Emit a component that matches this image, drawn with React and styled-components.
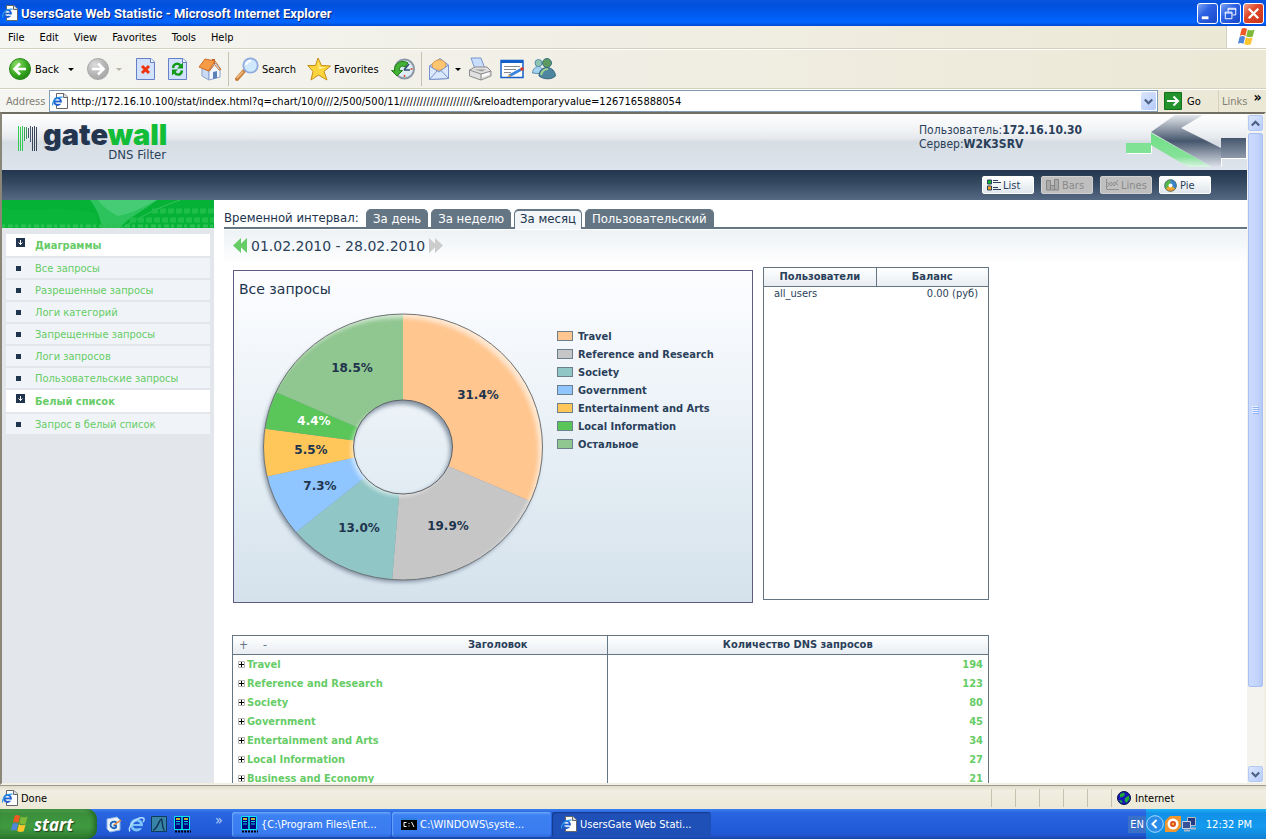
import React,{useState} from "react";
import styled,{createGlobalStyle} from "styled-components"

const menuItems=["File","Edit","View","Favorites","Tools","Help"]

const sections=[
  {title:"Диаграммы",links:["Все запросы","Разрешенные запросы","Логи категорий","Запрещенные запросы","Логи запросов","Пользовательские запросы"]},
  {title:"Белый список",links:["Запрос в белый список"]},
]

const intervals=["За день","За неделю","За месяц","Пользовательский"]

const slices=[
  {name:"Travel",value:31.4,label:"31.4%",color:"#ffc68f",x:244,y:129},
  {name:"Reference and Research",value:19.9,label:"19.9%",color:"#c6c6c6",x:214,y:260},
  {name:"Society",value:13.0,label:"13.0%",color:"#90c6c6",x:125,y:262},
  {name:"Government",value:7.3,label:"7.3%",color:"#90c6ff",x:86,y:220},
  {name:"Entertainment and Arts",value:5.5,label:"5.5%",color:"#ffc65a",x:77,y:184},
  {name:"Local Information",value:4.4,label:"4.4%",color:"#5ac65a",x:80,y:155,light:true},
  {name:"Остальное",value:18.5,label:"18.5%",color:"#90c690",x:118,y:102},
]

const requests=[
  ["Travel",194],
  ["Reference and Research",123],
  ["Society",80],
  ["Government",45],
  ["Entertainment and Arts",34],
  ["Local Information",27],
  ["Business and Economy",21],
]

const CX=169
const CY=177

// point where a ray at the given share of the turn leaves the ellipse
const edge=(share,rx,ry)=>{
  const a=share*Math.PI*2
  const dx=Math.sin(a)
  const dy=-Math.cos(a)
  const r=1/Math.sqrt((dx/rx)**2+(dy/ry)**2)
  return `${(CX+dx*r).toFixed(2)} ${(CY+dy*r).toFixed(2)}`
}

const slicePath=(from,to)=>
  `M${edge(from,49.5,47)}L${edge(from,139.5,133)}A139.5 133 0 0 1 ${edge(to,139.5,133)}L${edge(to,49.5,47)}A49.5 47 0 0 0 ${edge(from,49.5,47)}Z`

const oval=(cx,cy,rx,ry)=>`M${cx-rx} ${cy}a${rx} ${ry} 0 1 0 ${rx*2} 0a${rx} ${ry} 0 1 0 ${-rx*2} 0Z`

const ring=oval(CX,CY,139.5,133)+oval(CX,CY,49.5,47)

const Flag=({size=18})=>(
  <svg width={size} height={size} viewBox="0 0 18 18" aria-hidden="true">
    <path d="M4.2 1.6C6 .7 7.300 .8 9 1.800L7.500 8C6 7.100 4.400 7 2.600 7.900Z" fill="#ee5a24"/>
    <path d="M9.800 2.200C11.600 3.200 13.400 3.300 15.800 2.200L14.200 8.500C12 9.500 10 9.300 8.300 8.400Z" fill="#7fb93a"/>
    <path d="M2.400 8.700C4.200 7.900 5.800 8 7.300 8.900L5.800 15C4.200 14.200 2.600 14.100 .8 15Z" fill="#4f86d9"/>
    <path d="M8 9.300C9.700 10.200 11.600 10.400 14 9.400L12.400 15.600C10.200 16.600 8.200 16.300 6.500 15.400Z" fill="#fbc52c"/>
  </svg>
)

const IePage=({size=16})=>(
  <svg width={size} height={size} viewBox="0 0 16 16" aria-hidden="true">
    <path d="M4.500 .5H12L15.500 4V15.500H4.500Z" fill="#fff" stroke="#666"/>
    <path d="M11.500 .5V4.500H15.500" fill="#ddd" stroke="#666"/>
    <circle cx="5.500" cy="8.500" r="3.400" fill="#fff" stroke="#1c5fd0" strokeWidth="2"/>
    <path d="M3 8.500H9" stroke="#1c5fd0" strokeWidth="1.800"/>
    <path d="M.8 12.500C-.5 8 5 3.500 10.500 4.200" fill="none" stroke="#2d9be8" strokeWidth="1.200"/>
    <path d="M6.500 10.200H10" stroke="#fff" strokeWidth="1.200"/>
  </svg>
)

const IeBall=()=>(
  <svg width="17" height="17" viewBox="0 0 17 17" aria-hidden="true">
    <circle cx="8.500" cy="9" r="5" fill="none" stroke="#7cc4fa" strokeWidth="3"/>
    <path d="M4.500 9H13.500" stroke="#7cc4fa" strokeWidth="2"/>
    <path d="M9 11.200H15" stroke="#245edb" strokeWidth="2"/>
    <path d="M2 15.500C-1 11 9 .5 15 2C17 2.700 16 5 15 6" fill="none" stroke="#b7e0ff" strokeWidth="1.400"/>
  </svg>
)

const FarIcon=()=>(
  <svg width="17" height="17" viewBox="0 0 17 17" aria-hidden="true">
    <path d="M.5 .5H15.500V13.500H.5Z" fill="#00007c" stroke="#00e8f0"/>
    <path d="M8 0V14" stroke="#00e8f0" strokeWidth="1.500"/>
    <path d="M2 3H6M10 3H14" stroke="#ffee20" strokeWidth="1.500"/>
    <path d="M2 5.500H6M2 8H6M10 5.500H14M10 8H14" stroke="#00d0e0"/>
    <path d="M1 15.500H17" stroke="#000" strokeWidth="2" strokeDasharray="2 1"/>
  </svg>
)

const CmdIcon=()=>(
  <svg width="16" height="16" viewBox="0 0 16 16" aria-hidden="true">
    <path d="M0 2H16V14H0Z" fill="#000"/>
    <path d="M0 2H16V4H0Z" fill="#2a7fe0"/>
    <path d="M5.500 6.500H3V10.500H5.500M8 7V8M8 9.500V10.500M10.500 6L13 11" fill="none" stroke="#fff"/>
  </svg>
)

const BackIcon=({off})=>(
  <svg width="24" height="24" viewBox="0 0 24 24" aria-hidden="true">
    <defs>
      <radialGradient id={off?"fwdg":"backg"} cx=".35" cy=".3" r=".8">
        <stop offset="0" stopColor={off?"#dcdcdc":"#8fdc6d"}/>
        <stop offset=".6" stopColor={off?"#b4b4b4":"#37a81f"}/>
        <stop offset="1" stopColor={off?"#a5a5a5":"#1d7d12"}/>
      </radialGradient>
    </defs>
    <circle cx="12" cy="12" r="10.500" fill={off?"url(#fwdg)":"url(#backg)"} stroke={off?"#a9a9a9":"#2b8a1c"}/>
    <path d={off?"M6 12H17M12 6.500L17.500 12L12 17.500":"M18 12H7M12 6.500L6.500 12L12 17.500"} fill="none" stroke="#fff" strokeWidth="2.600"/>
  </svg>
)

const StopIcon=()=>(
  <svg width="24" height="24" viewBox="0 0 24 24" aria-hidden="true">
    <path d="M2.500 1.500H17L20.500 5V22.500H2.500Z" fill="#d3e2fc" stroke="#6580c8"/>
    <path d="M16.500 1.500V5.500H20.500" fill="#fff" stroke="#6580c8"/>
    <path d="M8 9L15 16M15 9L8 16" stroke="#f0330c" strokeWidth="3"/>
  </svg>
)

const RefreshIcon=()=>(
  <svg width="24" height="24" viewBox="0 0 24 24" aria-hidden="true">
    <path d="M2.500 1.500H17L20.500 5V22.500H2.500Z" fill="#d3e2fc" stroke="#6580c8"/>
    <path d="M16.500 1.500V5.500H20.500" fill="#fff" stroke="#6580c8"/>
    <path d="M7 11C7.500 6.500 12 5.500 14.500 8.500M16 13.500C15.500 18 11 19 8.500 15.500" fill="none" stroke="#129a16" strokeWidth="2.400"/>
    <path d="M17 5.500V11.500H11ZM6 18.500V12.500H12Z" fill="#129a16"/>
  </svg>
)

const HomeIcon=()=>(
  <svg width="24" height="24" viewBox="0 0 24 24" aria-hidden="true">
    <path d="M4 11L11 14V23L4 19Z" fill="#c9dbf5" stroke="#8ba3cc"/>
    <path d="M11 14L17 6L22 12V20L11 23Z" fill="#f3f7fd" stroke="#8ba3cc"/>
    <path d="M15 15L19 14V21L15 22Z" fill="#5c7fb8"/>
    <path d="M14 2H17V7H14Z" fill="#c05a2a"/>
    <path d="M1 10L7 2L17 4L10.500 14Z" fill="#f59a45" stroke="#d0702a"/>
    <path d="M17 4L23 12.500L21 13L16.500 7.500L11 14.500" fill="none" stroke="#d0702a"/>
  </svg>
)

const SearchIcon=()=>(
  <svg width="24" height="24" viewBox="0 0 24 24" aria-hidden="true">
    <path d="M2 22L9 14" stroke="#c9803c" strokeWidth="4" strokeLinecap="round"/>
    <path d="M2 21L8 14.500" stroke="#f3bc82" strokeWidth="1.500"/>
    <circle cx="15.500" cy="8.500" r="7.200" fill="#cfe8fb" stroke="#8fabe0" strokeWidth="1.800"/>
    <path d="M11 8C11.500 5.500 13.500 4 16 4" fill="none" stroke="#fff" strokeWidth="2"/>
  </svg>
)

const StarIcon=()=>(
  <svg width="24" height="24" viewBox="0 0 24 24" aria-hidden="true">
    <path d="M11 1L14.500 8.500L23.500 9L17 14.500L20 23L11.500 18L4 23L6 14.500L.8 8.500L8.500 8.500Z" fill="#fcd53c" stroke="#c58d16"/>
    <path d="M11 4L12.800 10L19 10.500L12 12Z" fill="#fff3a8"/>
  </svg>
)

const HistoryIcon=()=>(
  <svg width="24" height="24" viewBox="0 0 24 24" aria-hidden="true">
    <circle cx="13.500" cy="12" r="9.500" fill="#dcebf4" stroke="#8b97a4" strokeWidth="2"/>
    <path d="M3.500 14C2.500 6 11 2 17 6L14 10C10.500 8 8 10 8.500 13.500H11.500L6 19L.5 13.500Z" fill="#45b036" stroke="#1d7d12"/>
    <path d="M13 13L18 7M13 13H19" stroke="#35506e" strokeWidth="1.600"/>
    <path d="M13.500 18V20M19.500 12H21.500" stroke="#d9402a" strokeWidth="1.500"/>
  </svg>
)

const MailIcon=()=>(
  <svg width="24" height="24" viewBox="0 0 24 24" aria-hidden="true">
    <path d="M1.500 9L12 1.500L20.500 8V21.500L1.500 22.500Z" fill="#b8d0f5" stroke="#7b93cc"/>
    <path d="M4 7C8 2 14 1 18 7L17 13H5Z" fill="#fbc66f" stroke="#dd9a4a"/>
    <path d="M1.500 9L11 15L20.500 8V21.500L1.500 22.500Z" fill="#d9e8fd" stroke="#7b93cc"/>
    <path d="M1.500 22.500L9 14M20.500 21.500L13 13.500" stroke="#7b93cc"/>
  </svg>
)

const PrintIcon=()=>(
  <svg width="24" height="24" viewBox="0 0 24 24" aria-hidden="true">
    <path d="M3 1H13L17 12H7Z" fill="#c9defc" stroke="#7896d0"/>
    <path d="M1.500 13L7 10H19L23 14V19L13 23L1.500 19Z" fill="#e0e0e0" stroke="#8c8c8c"/>
    <path d="M1.500 13L13 17L23 14M13 17V23" fill="none" stroke="#8c8c8c"/>
    <path d="M6 12.500H18L14 14.500Z" fill="#9a9a9a"/>
    <path d="M14 19L21 16.500" stroke="#fff" strokeWidth="2"/>
  </svg>
)

const EditIcon=()=>(
  <svg width="24" height="24" viewBox="0 0 24 24" aria-hidden="true">
    <path d="M1 3.500H23V20.500H1Z" fill="#fff" stroke="#1560c8" strokeWidth="1.500"/>
    <path d="M1 3H23V6H1Z" fill="#1560c8"/>
    <path d="M4 9.500H20M4 12.500H16M4 15.500H11" stroke="#8a8a8a"/>
    <path d="M9 19L21 12.500" stroke="#3a86de" strokeWidth="3"/>
    <path d="M6.500 20L10 17.500L11 19.500Z" fill="#e8a040"/>
    <circle cx="22" cy="12" r="1.800" fill="#e0341c"/>
  </svg>
)

const PeopleIcon=()=>(
  <svg width="24" height="24" viewBox="0 0 24 24" aria-hidden="true">
    <circle cx="6.500" cy="6" r="3.500" fill="#8cc4b4" stroke="#5a8eaa"/>
    <path d="M.5 16C1 11 4 9.500 7 9.500C9 10 11 12 11 17Z" fill="#a4d3f2" stroke="#5a8eaa"/>
    <circle cx="15" cy="6" r="4.500" fill="#5c9a60" stroke="#3b7486"/>
    <path d="M7 19C7 13 11 10.500 15 10.500C20 11 23 14 23.500 19C19 23 12 22.500 7 19Z" fill="#4e86a0" stroke="#35657e"/>
    <path d="M9 18C10 14 13 12 16 12" fill="none" stroke="#a2d490" strokeWidth="2"/>
  </svg>
)

const Caret=({off})=>(
  <svg width="6" height="3" viewBox="0 0 6 3" aria-hidden="true"><path d="M0 0H6L3 3Z" fill={off?"#b8b5a4":"#000"}/></svg>
)

const Chevron=({up})=>(
  <svg width="9" height="7" viewBox="0 0 9 7" aria-hidden="true">
    <path d={up?"M.8 5.500L4.500 1.800L8.200 5.500":"M.8 1.500L4.500 5.200L8.200 1.500"} fill="none" stroke="#4d6185" strokeWidth="2.200"/>
  </svg>
)

const Arrows=({back,color})=>(
  <svg width="14" height="15" viewBox="0 0 14 15" aria-hidden="true">
    <path d={back?"M8 0V15L0 7.500ZM14 0V15L6 7.500Z":"M0 0V15L8 7.500ZM6 0V15L14 7.500Z"} fill={color}/>
  </svg>
)

const viewIcons={
  List:<svg width="15" height="12" viewBox="0 0 15 12" aria-hidden="true">
    <path d="M.5 1H4.500V5H.5Z" fill="#0cb830" stroke="#2c4059"/><path d="M.5 7H4.500V11H.5Z" fill="#f9a31c" stroke="#2c4059"/>
    <path d="M6 1.500H11M6 3.500H14M6 8.500H11M6 10.500H14" stroke="#2c4059"/>
  </svg>,
  Bars:<svg width="15" height="12" viewBox="0 0 15 12" aria-hidden="true">
    <path d="M.5 1.500H4.500V11H.5ZM4.500 6.500H8.500V11H4.500ZM8.500 .5H12.500V11H8.500Z" fill="#a9a9a9" stroke="#868686"/>
  </svg>,
  Lines:<svg width="15" height="12" viewBox="0 0 15 12" aria-hidden="true">
    <path d="M1.500 0V10.500H14M2 8L6 3L9 7L13 1M2 3L6 7L9 3L13 6" fill="none" stroke="#909090"/>
  </svg>,
  Pie:<svg width="15" height="13" viewBox="0 0 15 13" aria-hidden="true">
    <circle cx="6.500" cy="6.500" r="6" fill="#55b948"/>
    <path d="M6.500 .5A6 6 0 0 1 11.500 9.800L6.500 6.500Z" fill="#3a86cc"/>
    <path d="M11.500 9.800A6 6 0 0 1 1.500 9.800L6.500 6.500Z" fill="#f4a32a"/>
    <circle cx="6.500" cy="6.500" r="5.800" fill="none" stroke="#47627a" strokeWidth=".8"/>
    <circle cx="6.500" cy="6.500" r="2" fill="#fff"/>
  </svg>,
}

const LogoBars=()=>(
  <svg width="19" height="26" viewBox="0 0 19 26" aria-hidden="true">
    <path d="M.5 0V25M2.500 1V25M4.500 0V25" stroke="#34cc55"/>
    <path d="M6.500 1V15M8.500 1V13" stroke="#3d9c5c"/>
    <path d="M10.500 2V12M12.500 0V16" stroke="#4a5a6c"/>
    <path d="M14.500 1V25M16.500 0V25M18.500 1V25" stroke="#3a4658"/>
  </svg>
)

const HeaderArt=()=>(
  <svg width="121" height="56" viewBox="0 0 121 56" aria-hidden="true">
    <defs>
      <linearGradient id="fadeDark" x1="0" y1="0" x2="0" y2="1">
        <stop offset="0" stopColor="#e4e8ec"/>
        <stop offset=".5" stopColor="#46566d"/>
        <stop offset="1" stopColor="#dde2ea"/>
      </linearGradient>
      <linearGradient id="fadeBox" x1="0" y1="0" x2="0" y2="1">
        <stop offset="0" stopColor="#46566d"/>
        <stop offset="1" stopColor="#8e9aab"/>
      </linearGradient>
      <linearGradient id="fadeGreen" x1="0" y1="0" x2="0" y2="1">
        <stop offset="0" stopColor="#6fdf86"/>
        <stop offset=".7" stopColor="#85e298"/>
        <stop offset="1" stopColor="#dff4e6"/>
      </linearGradient>
    </defs>
    <path d="M1 30H26V40H1Z" fill="#fff"/>
    <path d="M0 29H25V39H0Z" fill="#7fe294"/>
    <path d="M25 19L86 53H62L25 31Z" fill="url(#fadeGreen)"/>
    <path d="M25 18L49 1H77L55 14L95 34V53H86Z" fill="url(#fadeDark)"/>
    <path d="M95 24H120V44H95Z" fill="url(#fadeBox)"/>
    <path d="M95.500 53V44.500H120.500V24" fill="none" stroke="#fff"/>
  </svg>
)

const BannerArt=()=>(
  <svg width="212" height="28" viewBox="0 0 212 28" aria-hidden="true">
    <path d="M0 0H212V28H0Z" fill="#06b236"/>
    <path d="M0 8C30 14 60 4 95 14V28H0Z" fill="#0ab63a"/>
    <path d="M88 0H155C140 12 125 18 118 28H100C98 16 94 8 88 0Z" fill="#2cc35c"/>
    <path d="M96 0H155C140 8 128 14 116 16C108 12 100 6 96 0Z" fill="#46cc74"/>
    <path d="M178 0C155 8 140 16 120 28" stroke="#35c45c" fill="none"/>
    <path d="M128 20H212M150 11H212" stroke="#1fbd4a" strokeWidth="5" strokeDasharray="6 2"/>
    <path d="M0 26H212" stroke="#2cc054" strokeWidth="3" strokeDasharray="3 3 5 2"/>
  </svg>
)

const Donut=()=>{
  let total=0
  return(
    <svg width="318" height="322" viewBox="0 0 318 322" role="img" aria-label="Все запросы">
      <defs>
        <filter id="soft" x="-20%" y="-20%" width="140%" height="140%"><feGaussianBlur stdDeviation="2"/></filter>
        <clipPath id="ringClip"><path d={ring} clipRule="evenodd"/></clipPath>
      </defs>
      <path d={oval(CX-2,CY+3,139,132)+oval(CX-2,CY+3,49,46)} fillRule="evenodd" fill="#44566c" opacity=".6" filter="url(#soft)"/>
      {slices.map((s)=>{
        const from=total/100
        total+=s.value
        return <path key={s.name} d={slicePath(from,total/100)} fill={s.color}/>
      })}
      <g clipPath="url(#ringClip)">
        <path
          d={"M-20 -20H340V340H-20Z"+oval(CX-4,CY+4,139.5,133)+oval(CX-3,CY+3,49,46)}
          fillRule="evenodd" fill="#fff" opacity=".6" filter="url(#soft)"
        />
      </g>
      <path d={oval(CX,CY,139.5,133)} fill="none" stroke="#707477"/>
      <path d={oval(CX,CY,49.5,47)} fill="none" stroke="#606468"/>
      {slices.map((s)=>(
        <SliceLabel key={s.name} x={s.x} y={s.y} $light={s.light}>{s.label}</SliceLabel>
      ))}
    </svg>
  )
}

const App=()=>{
    const [url,setUrl]=useState("http://172.16.10.100/stat/index.html?q=chart/10/0///2/500/500/11//////////////////////&reloadtemporaryvalue=1267165888054")
    const [interval,setInterval]=useState("За месяц")

    return(
     <Screen>
        <GlobalStyle/>
        <TitleBar>
            <IePage/>
            <Title>UsersGate Web Statistic - Microsoft Internet Explorer</Title>
            <WinButton aria-label="Minimize">
               <svg width="19" height="19" viewBox="0 0 20 20"><path d="M4 13H11V16H4Z" fill="#fff"/></svg>
            </WinButton>
            <WinButton aria-label="Restore">
               <svg width="19" height="19" viewBox="0 0 20 20"><path d="M7.500 8V4.500H15.500V11.500H12M7 5.500H16M4.500 8.500H11.500V15.500H4.500ZM4 9.500H12" fill="none" stroke="#fff"/></svg>
            </WinButton>
            <WinButton aria-label="Close" $close>
               <svg width="19" height="19" viewBox="0 0 20 20"><path d="M5 5L15 15M15 5L5 15" stroke="#fff" strokeWidth="2.400"/></svg>
            </WinButton>
        </TitleBar>

        <MenuBar>
            {menuItems.map((m)=><MenuItem key={m}>{m}</MenuItem>)}
            <FlagBox><Flag size={20}/></FlagBox>
        </MenuBar>

        <ToolBar>
            <ToolButton $width="70px"><BackIcon/>Back<CaretSlot><Caret/></CaretSlot></ToolButton>
            <ToolButton $width="40px" aria-label="Forward" disabled><BackIcon off/><CaretSlot><Caret off/></CaretSlot></ToolButton>
            <ToolButton aria-label="Stop"><StopIcon/></ToolButton>
            <ToolButton aria-label="Refresh"><RefreshIcon/></ToolButton>
            <ToolButton aria-label="Home"><HomeIcon/></ToolButton>
            <ToolLine/>
            <ToolButton $width="64px"><SearchIcon/>Search</ToolButton>
            <ToolButton $width="76px"><StarIcon/>Favorites</ToolButton>
            <ToolButton aria-label="History"><HistoryIcon/></ToolButton>
            <ToolLine/>
            <ToolButton $width="32px" aria-label="Mail"><MailIcon/><CaretSlot><Caret/></CaretSlot></ToolButton>
            <ToolButton aria-label="Print"><PrintIcon/></ToolButton>
            <ToolButton aria-label="Edit"><EditIcon/></ToolButton>
            <ToolButton aria-label="Messenger"><PeopleIcon/></ToolButton>
        </ToolBar>

        <AddressBar>
            <AddressLabel htmlFor="address">Address</AddressLabel>
            <AddressField>
               <IePage/>
               <AddressInput id="address" value={url} onChange={(e)=>setUrl(e.target.value)}/>
               <DropButton aria-label="Show addresses"><Chevron/></DropButton>
            </AddressField>
            <GoButton>
               <svg width="18" height="18" viewBox="0 0 18 18" aria-hidden="true">
                  <path d="M.5 .5H17.500V17.500H.5Z" fill="#22922a" stroke="#15701c"/>
                  <path d="M3 9H14M9.500 4.500L14 9L9.500 13.500" fill="none" stroke="#fff" strokeWidth="2"/>
               </svg>
               Go
            </GoButton>
            <Links>Links<LinksMore>»</LinksMore></Links>
        </AddressBar>

        <Viewport>
            <Page>
               <Header>
                  <LogoBars/>
                  <Brand>
                     <Wordmark>gate<GreenWord>wall</GreenWord></Wordmark>
                     <Product>DNS Filter</Product>
                  </Brand>
                  <UserInfo>
                     <div>Пользователь:<b>172.16.10.30</b></div>
                     <div>Сервер:<b>W2K3SRV</b></div>
                  </UserInfo>
                  <HeaderArt/>
               </Header>
               <NavBar>
                  {["List","Bars","Lines","Pie"].map((v)=>(
                     <ViewButton key={v} disabled={v==="Bars"||v==="Lines"}>{viewIcons[v]}{v}</ViewButton>
                  ))}
               </NavBar>
               <Columns>
                  <Sidebar>
                     <BannerArt/>
                     <SideList>
                        {sections.map((s)=>(
                           <React.Fragment key={s.title}>
                              <SideTitle>
                                 <svg width="9" height="9" viewBox="0 0 9 9" aria-hidden="true">
                                    <path d="M0 0H9V9H0Z" fill="#21344d"/>
                                    <path d="M4.500 2V7M2.500 4.500L4.500 6.500L6.500 4.500" fill="none" stroke="#fff"/>
                                 </svg>
                                 <span>{s.title}</span>
                              </SideTitle>
                              {s.links.map((l)=><SideLink key={l} href="#"><Bullet/>{l}</SideLink>)}
                           </React.Fragment>
                        ))}
                     </SideList>
                  </Sidebar>
                  <Main>
                     <TabRow>
                        <TabCaption>Временной интервал:</TabCaption>
                        {intervals.map((t)=>(
                           <Tab key={t} $active={t===interval} onClick={()=>setInterval(t)}>{t}</Tab>
                        ))}
                     </TabRow>
                     <DateRow>
                        <PlainButton aria-label="Назад"><Arrows back color="#66cc66"/></PlainButton>
                        01.02.2010 - 28.02.2010
                        <PlainButton aria-label="Вперед"><Arrows color="#cccccc"/></PlainButton>
                     </DateRow>
                     <Report>
                        <TopRow>
                           <ChartPanel>
                              <ChartTitle>Все запросы</ChartTitle>
                              <ChartBody>
                                 <Donut/>
                                 <Legend>
                                    {slices.map((s)=><LegendItem key={s.name}><Swatch $color={s.color}/>{s.name}</LegendItem>)}
                                 </Legend>
                              </ChartBody>
                           </ChartPanel>
                           <BalancePanel>
                              <Table>
                                 <thead><tr><Th>Пользователи</Th><Th>Баланс</Th></tr></thead>
                                 <tbody><tr><BalanceCell>all_users</BalanceCell><BalanceCell $right>0.00 (руб)</BalanceCell></tr></tbody>
                              </Table>
                           </BalancePanel>
                        </TopRow>
                        <RequestPanel>
                           <Table>
                              <thead>
                                 <tr>
                                    <Th $width="374px">
                                       <HeadRow>
                                          <PlusMinus><PlainButton aria-label="Развернуть">+</PlainButton><PlainButton aria-label="Свернуть">-</PlainButton></PlusMinus>
                                          <HeadText>Заголовок</HeadText>
                                       </HeadRow>
                                    </Th>
                                    <Th>Количество DNS запросов</Th>
                                 </tr>
                              </thead>
                              <tbody>
                                 {requests.map(([name,count])=>(
                                    <tr key={name}>
                                       <Td>
                                          <Expand>
                                             <svg width="7" height="7" viewBox="0 0 7 7" aria-hidden="true">
                                                <path d="M.5 .5H6.500V6.500H.5Z" fill="#fff" stroke="#b4b4b4"/>
                                                <path d="M3.500 1V6M1 3.500H6" stroke="#000"/>
                                             </svg>
                                             {name}
                                          </Expand>
                                       </Td>
                                       <Td $right>{count}</Td>
                                    </tr>
                                 ))}
                              </tbody>
                           </Table>
                        </RequestPanel>
                     </Report>
                  </Main>
               </Columns>
            </Page>
            <ScrollBar>
               <ScrollButton aria-label="Scroll up"><Chevron up/></ScrollButton>
               <ScrollThumb>
                  <svg width="7" height="8" viewBox="0 0 7 8" aria-hidden="true">
                     <path d="M0 .5H6M0 2.500H6M0 4.500H6M0 6.500H6" stroke="#eef4fe"/>
                     <path d="M1 1.500H7M1 3.500H7M1 5.500H7M1 7.500H7" stroke="#8cb0f8"/>
                  </svg>
               </ScrollThumb>
               <ScrollSpace/>
               <ScrollButton aria-label="Scroll down"><Chevron/></ScrollButton>
            </ScrollBar>
        </Viewport>

        <StatusBar>
            <IePage/>
            <StatusText>Done</StatusText>
            {[1,2,3,4,5].map((n)=><StatusCell key={n}/>)}
            <StatusZone>
               <svg width="14" height="14" viewBox="0 0 14 14" aria-hidden="true">
                  <circle cx="7" cy="7" r="6.500" fill="#1414b8" stroke="#061040"/>
                  <path d="M3 3L7 1.500L8 4L5.500 6L3 6.500ZM8 7L12 4.500L12.500 8L9.500 12L7.500 10ZM2 9L5 9.500L5.500 12L3.500 11.500Z" fill="#1da83c"/>
               </svg>
               Internet
            </StatusZone>
        </StatusBar>

        <TaskBar>
            <StartButton><Flag size={20}/>start</StartButton>
            <QuickLaunch>
               <svg width="17" height="17" viewBox="0 0 17 17" aria-hidden="true">
                  <path d="M2 3L12 1L15 4V14L5 16L2 13Z" fill="#eaf3fc" stroke="#8fb5e4"/>
                  <path d="M11.500 6.500C9 4.500 5.500 6 5.500 9C5.500 12 9 13 11 11.500V9.500H8.500" fill="none" stroke="#1c62b8" strokeWidth="1.800"/>
                  <path d="M9 9L16 4" stroke="#e8832c" strokeWidth="1.500"/>
               </svg>
               <IeBall/>
               <svg width="17" height="17" viewBox="0 0 17 17" aria-hidden="true">
                  <path d="M.5 .5H15.500V15.500H.5Z" fill="#3983a8" stroke="#103c5c"/>
                  <path d="M2 14C7 13 7 5 10.500 3C12 5 10.500 12 13.500 14.500" fill="none" stroke="#0d3453" strokeWidth="1.400"/>
               </svg>
               <FarIcon/>
            </QuickLaunch>
            <More>»</More>
            <Task><FarIcon/>{"{C:\\Program Files\\Ent..."}</Task>
            <Task><CmdIcon/>{"C:\\WINDOWS\\syste..."}</Task>
            <Task $active><IePage/>UsersGate Web Stati...</Task>
            <Language>EN</Language>
            <Tray>
               <svg width="18" height="18" viewBox="0 0 18 18" aria-hidden="true">
                  <circle cx="9" cy="9" r="8.300" fill="#2a8ce8" stroke="#a5dcff"/>
                  <path d="M10.500 5L6.500 9L10.500 13" fill="none" stroke="#fff" strokeWidth="2"/>
               </svg>
               <svg width="16" height="16" viewBox="0 0 16 16" aria-hidden="true">
                  <path d="M5 0H16V11L11 16H0V5Z" fill="#f2962c"/>
                  <circle cx="8" cy="8" r="5.500" fill="#fff"/>
                  <circle cx="8" cy="8" r="3" fill="#d84a1c"/>
                  <circle cx="8" cy="8" r="1.300" fill="#fbb040"/>
               </svg>
               <svg width="15" height="15" viewBox="0 0 15 15" aria-hidden="true">
                  <path d="M5.500 .5H13.500V8.500H5.500Z" fill="#253a80" stroke="#b4bcc8"/>
                  <path d="M.5 4.500H8.500V11.500H.5Z" fill="#3a5298" stroke="#c8d0dc"/>
                  <path d="M2 13.500H8M9 11.500H14" stroke="#aeb6c2" strokeWidth="2"/>
               </svg>
               <Clock>12:32 PM</Clock>
            </Tray>
        </TaskBar>
     </Screen>
    )
}

export default App

const GlobalStyle=createGlobalStyle`
   *{box-sizing:border-box;}
   body{
     margin:0;
     overflow:hidden;
     font:11px "DejaVu Sans Condensed","DejaVu Sans",sans-serif;
     color:#000;
   }
   button{
     font:inherit;
     color:inherit;
     border:0;
     padding:0;
     background:none;
     white-space:nowrap;
   }
   svg{display:block;flex:none;}
`

const Screen=styled.div`
   height:100vh;
   display:flex;
   flex-direction:column;
   background:#ece9d8;
`

const TitleBar=styled.header`
   flex:none;
   height:26px;
   display:flex;
   align-items:center;
   gap:2px;
   padding:0 2px;
   background:linear-gradient(#0a55e0 0,#0050dc 20%,#0058ee 50%,#0066ff 85%,#0048d0 100%);
`

const Title=styled.h1`
   flex:1;
   margin:0;
   padding-left:1px;
   font:bold 13px Roboto,sans-serif;
   color:#fff;
   text-shadow:1px 1px 0 #0a1e6e;
`

const WinButton=styled.button`
   width:21px;
   height:21px;
   border:1px solid #fff;
   border-radius:3px;
   background:${(p)=>p.$close
     ?"linear-gradient(135deg,#f0a088,#e0482a 40%,#c8351a)"
     :"linear-gradient(135deg,#7fa4f4,#2c62e4 40%,#1a48c8)"};
`

const MenuBar=styled.nav`
   flex:none;
   height:23px;
   display:flex;
   align-items:center;
   padding-left:2px;
   border-bottom:1px solid #d5d1bf;
   background:linear-gradient(90deg,#f5f5f2,#ece8d6);
`

const MenuItem=styled.button`
   height:22px;
   padding:0 7px 0 6px;
   margin-right:2px;
`

const FlagBox=styled.div`
   align-self:stretch;
   width:40px;
   margin-left:auto;
   display:flex;
   align-items:center;
   justify-content:center;
   border-left:1px solid #d5d1bf;
   background:#fff;
`

const ToolBar=styled.div`
   flex:none;
   height:40px;
   display:flex;
   align-items:center;
   gap:8px;
   padding-left:8px;
   border-top:1px solid #fff;
   border-bottom:1px solid #d5d1bf;
   background:linear-gradient(90deg,#f5f5f2,#ece8d6);
`

const ToolButton=styled.button`
   width:${(p)=>p.$width||"24px"};
   display:flex;
   align-items:center;
   gap:3px;
`

const CaretSlot=styled.span`
   margin-left:auto;
   padding-right:4px;
`

const ToolLine=styled.div`
   width:1px;
   height:34px;
   margin:0 -2px;
   background:#c5c2b0;
`

const AddressBar=styled.div`
   flex:none;
   height:23px;
   display:flex;
   align-items:center;
   border-top:1px solid #fff;
   background:linear-gradient(90deg,#f5f5f2,#ece8d6);
`

const AddressLabel=styled.label`
   width:49px;
   padding-left:6px;
   color:#817f73;
`

const AddressField=styled.div`
   flex:1;
   height:22px;
   display:flex;
   align-items:center;
   gap:3px;
   padding:0 1px 0 2px;
   border:1px solid #7f9db9;
   background:#fff;
`

const AddressInput=styled.input`
   flex:1;
   min-width:0;
   border:0;
   padding:0;
   outline:0;
   font:inherit;
   background:none;
`

const DropButton=styled.button`
   width:15px;
   height:18px;
   display:flex;
   align-items:center;
   justify-content:center;
   border-radius:2px;
   background:linear-gradient(135deg,#dbe6fe,#b4cafb);
`

const GoButton=styled.button`
   width:60px;
   display:flex;
   align-items:center;
   gap:5px;
   padding-left:6px;
`

const Links=styled.div`
   width:48px;
   height:22px;
   display:flex;
   align-items:center;
   gap:6px;
   padding-left:3px;
   border-left:1px solid #d5d1bf;
   color:#817f73;
`

const LinksMore=styled.b`
   padding-bottom:8px;
   font-size:14px;
   line-height:14px;
   color:#000;
`

const Viewport=styled.div`
   flex:1;
   min-height:0;
   display:flex;
   border:2px solid #8a8778;
   border-top-color:#716f64;
   border-right-color:#f1efe2;
   border-bottom-color:#f1efe2;
   background:#fff;
`

const Page=styled.div`
   flex:1;
   min-width:0;
   overflow:hidden;
   display:flex;
   flex-direction:column;
   color:#2a3f5a;
`

const Header=styled.div`
   flex:none;
   height:56px;
   display:flex;
   padding-left:16px;
   background:linear-gradient(#fff 0,#f0f2f5 30%,#e4e8ec 44%,#d6dde3 50%,#dde4ec 100%);

   & > svg:first-child{
     margin-top:12px;
   }
`

const Brand=styled.div`
   width:130px;
   padding:9px 0 0 6px;
`

const Wordmark=styled.div`
   font:900 29px/24px Inter,"Liberation Sans",sans-serif;
   color:#24364f;
`

const GreenWord=styled.span`
   color:#12bd38;
`

const Product=styled.div`
   width:123px;
   font-size:13px;
   line-height:16px;
   text-align:right;
`

const UserInfo=styled.div`
   width:207px;
   margin-left:auto;
   padding-top:9px;
   font-size:12px;
   line-height:14px;
`

const NavBar=styled.div`
   flex:none;
   height:30px;
   display:flex;
   align-items:center;
   justify-content:flex-end;
   gap:7px;
   padding-right:36px;
   background:linear-gradient(#22364f,#33475f 40%,#556983);
`

const ViewButton=styled.button`
   width:52px;
   height:18px;
   display:flex;
   align-items:center;
   gap:1px;
   padding-left:4px;
   border-radius:2px;
   border:1px solid ${(p)=>p.disabled?"#d0d0d0":"#fff"};
   background:${(p)=>p.disabled?"#bfbfbf":"linear-gradient(#fff,#dfe6ec)"};
   color:${(p)=>p.disabled?"#8a8a8a":"#2a3f5a"};
`

const Columns=styled.div`
   flex:1;
   min-height:0;
   display:flex;
`

const Sidebar=styled.aside`
   flex:none;
   width:212px;
   background:#e3e7eb;
`

const SideList=styled.div`
   display:flex;
   flex-direction:column;
   gap:2px;
   padding:6px 4px;
`

const SideTitle=styled.div`
   height:22px;
   display:flex;
   gap:10px;
   padding:4px 10px 0;
   background:#fff;
   font-weight:bold;
   line-height:16px;
   color:#66cc66;
`

const SideLink=styled.a`
   height:20px;
   display:flex;
   align-items:center;
   gap:14px;
   padding-left:10px;
   background:#f0f4f8;
   color:#66cc66;
   text-decoration:none;
`

const Bullet=styled.span`
   width:5px;
   height:5px;
   background:#21344d;
`

const Main=styled.main`
   flex:1;
   min-width:0;
   padding-left:10px;
`

const TabRow=styled.div`
   height:29px;
   display:flex;
   align-items:flex-end;
   gap:3px;
   border-bottom:2px solid #647584;
`

const TabCaption=styled.span`
   width:139px;
   font-size:13px;
   line-height:18px;
   color:#21344d;
   white-space:nowrap;
`

const Tab=styled.button`
   height:${(p)=>p.$active?"20px":"18px"};
   margin-bottom:${(p)=>p.$active?"-2px":"0"};
   padding:${(p)=>p.$active?"0 5px 3px":"0 6px"};
   border-radius:5px 5px 0 0;
   border:1px solid #647584;
   border-top-width:${(p)=>p.$active?"2px":"1px"};
   border-bottom:0;
   background:${(p)=>p.$active?"#f2f6f8":"#647584"};
   color:${(p)=>p.$active?"#21344d":"#fff"};
   font-size:13px;
   line-height:15px;
`

const DateRow=styled.div`
   height:38px;
   display:flex;
   align-items:center;
   gap:4px;
   padding:0 0 6px 9px;
   font:14px "DejaVu Sans",sans-serif;
   background:linear-gradient(#edf2f5,#fff 34px);
   border-top:1px solid #fff;
`

const PlainButton=styled.button`
   display:block;
`

const Report=styled.div`
   max-width:765px;
   padding-left:8px;
`

const TopRow=styled.div`
   display:flex;
   align-items:flex-start;
   gap:10px;
`

const ChartPanel=styled.section`
   flex:1;
   height:333px;
   margin:3px 0 0 1px;
   border:1px solid #5d5c82;
   background:linear-gradient(#fdfdff,#f5f8fc 20%,#e8f0f6 50%,#d5e2ec);
`

const ChartTitle=styled.h2`
   margin:0;
   padding:10px 5px 0;
   font:14px/16px "DejaVu Sans",sans-serif;
   color:#21344d;
`

const ChartBody=styled.div`
   display:flex;
   margin-top:-27px;
`

const SliceLabel=styled.text`
   font:bold 12px "DejaVu Sans",sans-serif;
   fill:${(p)=>p.$light?"#fff":"#21344d"};
   text-anchor:middle;
`

const Legend=styled.ul`
   list-style:none;
   margin:0;
   padding:57px 0 0 5px;
`

const LegendItem=styled.li`
   height:18px;
   display:flex;
   align-items:center;
   gap:5px;
   font-weight:bold;
   white-space:nowrap;
`

const Swatch=styled.span`
   width:16px;
   height:10px;
   border:1px solid #6c7f8c;
   background:${(p)=>p.$color};
`

const BalancePanel=styled.section`
   width:226px;
   height:333px;
   border:1px solid #647584;
`

const RequestPanel=styled.section`
   margin-top:32px;
   border:1px solid #647584;
   border-bottom:0;
`

const Table=styled.table`
   width:100%;
   table-layout:fixed;
   border-collapse:collapse;
`

const Th=styled.th`
   width:${(p)=>p.$width||"auto"};
   height:18px;
   padding:1px 0 0;
   border-bottom:1px solid #647584;
   background:linear-gradient(#fff,#e8edf2);
   line-height:16px;

   & + &{
     border-left:1px solid #647584;
   }
`

const BalanceCell=styled.td`
   padding:0 10px;
   line-height:14px;
   text-align:${(p)=>p.$right?"right":"left"};
`

const HeadRow=styled.div`
   display:flex;
   align-items:center;
`

const PlusMinus=styled.span`
   width:40px;
   display:flex;
   justify-content:space-between;
   padding:0 6px 0 6px;
   font-size:12px;
   font-weight:normal;
   color:#647584;
`

const HeadText=styled.span`
   flex:1;
   padding-left:116px;
`

const Td=styled.td`
   height:19px;
   padding:1px 5px 0;
   font-weight:bold;
   line-height:15px;
   color:#66cc66;
   text-align:${(p)=>p.$right?"right":"left"};

   & + &{
     border-left:1px solid #647584;
   }
`

const Expand=styled.button`
   display:flex;
   align-items:center;
   gap:2px;
`

const ScrollBar=styled.div`
   flex:none;
   width:17px;
   display:flex;
   flex-direction:column;
   align-items:center;
   gap:2px;
   padding:1px;
   background:#f4f3ee;
`

const ScrollButton=styled.button`
   width:15px;
   height:16px;
   display:flex;
   align-items:center;
   justify-content:center;
   border:1px solid #b4c8f6;
   border-radius:2px;
   background:linear-gradient(135deg,#dbe6fe,#b9cdfb);
`

const ScrollThumb=styled.div`
   flex:88;
   width:15px;
   display:flex;
   align-items:center;
   justify-content:center;
   border:1px solid #a9c0f4;
   border-radius:2px;
   background:linear-gradient(90deg,#cbdafe,#c4d4fc 60%,#b4c8f8);
`

const ScrollSpace=styled.div`
   flex:12;
`

const StatusBar=styled.footer`
   flex:none;
   height:24px;
   display:flex;
   align-items:center;
   padding:1px 0 0 2px;
   border-top:1px solid #9d9b8d;
   background:linear-gradient(#dfdccb,#f0eee2 20%,#ece9d8);
`

const StatusText=styled.span`
   flex:1;
   padding-left:3px;
`

const StatusCell=styled.span`
   width:24px;
   height:18px;
   border-left:1px solid #c5c2b0;
`

const StatusZone=styled.span`
   width:155px;
   height:18px;
   display:flex;
   align-items:center;
   gap:4px;
   padding-left:5px;
   border-left:1px solid #c5c2b0;
`

const TaskBar=styled.footer`
   flex:none;
   height:30px;
   display:flex;
   align-items:center;
   background:linear-gradient(#3a80ee 0,#2a66e0 12%,#245edb 50%,#2058d4 85%,#1a45a8);
   color:#fff;
`

const StartButton=styled.button`
   width:97px;
   height:30px;
   display:flex;
   align-items:center;
   gap:4px;
   padding-left:10px;
   border-radius:0 10px 10px 0;
   background:linear-gradient(#5bac56 0,#3c8f3c 15%,#3f9a3f 60%,#2f7a30);
   box-shadow:inset -3px 0 4px #246a26;
   font:italic bold 17px "Open Sans",sans-serif;
   text-shadow:1px 1px 1px #1c431c;
`

const QuickLaunch=styled.div`
   display:flex;
   gap:6px;
   padding-left:8px;
`

const More=styled.span`
   width:41px;
   padding:0 0 8px 24px;
   font-size:14px;
   color:#bcd4fa;
`

const Task=styled.button`
   width:159px;
   height:25px;
   margin-right:1px;
   display:flex;
   align-items:center;
   gap:3px;
   padding-left:9px;
   border-radius:3px;
   background:${(p)=>p.$active?"#1e50b8":"linear-gradient(#5a9af8,#3c80f2 15%,#3a7cf0 85%,#2f6ad8)"};
   box-shadow:inset 1px 1px 1px ${(p)=>p.$active?"#143a8c":"#6aa4fa"};
`

const Language=styled.span`
   margin-left:auto;
   padding:2px;
   background:#3a70c8;
`

const Tray=styled.div`
   width:120px;
   height:30px;
   display:flex;
   align-items:center;
   gap:1px;
   background:linear-gradient(#1cb4f4 0,#1290e8 15%,#139aee 60%,#0f80d4);
`

const Clock=styled.time`
   margin-left:auto;
   padding-right:14px;
`
